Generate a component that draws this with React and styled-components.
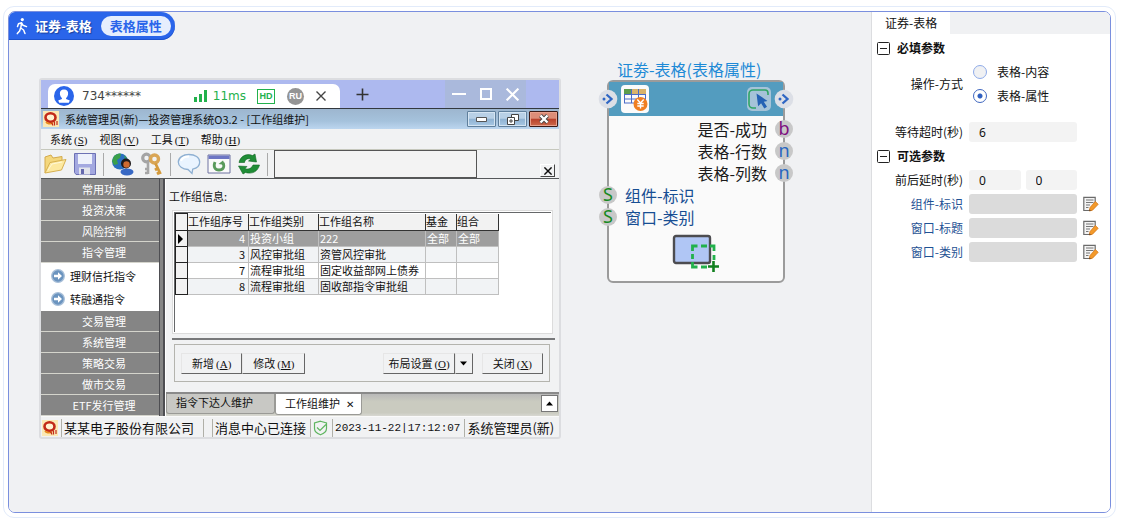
import { useState } from 'react'
import styled, { createGlobalStyle } from 'styled-components'

const GlobalStyle = createGlobalStyle`
  * {
    box-sizing: border-box;
  }
  body {
    margin: 0;
    background: #fff;
    color: #111;
    font: 12px/16px "Noto Sans CJK SC", sans-serif;
  }
  button, input {
    font: inherit;
    color: inherit;
    margin: 0;
  }
  button {
    padding: 0;
    border: 0;
    background: none;
    white-space: nowrap;
    cursor: pointer;
  }
  a {
    color: inherit;
    text-decoration: none;
  }
  svg {
    display: block;
    flex: none;
  }
`

/* ---------- page shell ---------- */

const Page = styled.div`
  display: flex;
  min-height: 100vh;
  padding: 6px 9px 2px 3px;
`
const Ring = styled.div`
  display: flex;
  flex: 1;
  padding: 4px;
  border: 1px solid #e2ebfa;
  border-radius: 11px;
`
const Shell = styled.div`
  display: flex;
  flex: 1;
  border: 1px solid #7a8fde;
  border-radius: 7px;
  overflow: hidden;
`
const Canvas = styled.main`
  flex: 1;
  min-width: 0;
  background: #f0f1f3;
`
const Crumb = styled.header`
  display: inline-flex;
  align-items: center;
  height: 28px;
  padding: 0 4px 0 4px;
  gap: 9px;
  border-radius: 0 14px 14px 0;
  background: #2a65ea;
  box-shadow: inset 0 -1px 0 #1d52cc;
  color: #fff;
  font-size: 13px;
  font-weight: 700;
`
const CrumbTitle = styled.h1`
  display: flex;
  align-items: center;
  gap: 4px;
  margin: 0;
  font-size: 13px;
  text-shadow: 1px 1px 1px #1a3f9c;
`
const CrumbBadge = styled.span`
  padding: 0 9px;
  line-height: 20px;
  border-radius: 10px;
  background: #e6eefd;
  color: #2a65ea;
`
const Stage = styled.div`
  display: flex;
  align-items: flex-start;
  gap: 46px;
  padding: 20px 20px 20px 30px;
`

/* ---------- remote desktop window ---------- */

const Remote = styled.section`
  flex: 0 1 522px;
  min-width: 0;
  margin-top: 18px;
  border: 2px solid #dcdde0;
  border-radius: 3px;
  background: #f1f2f3;
  font-size: 11px;
`
const RemoteBar = styled.div`
  display: flex;
  align-items: stretch;
  height: 28px;
  padding: 0 33px 0 7px;
  background: #adb9ef;
`
const RemoteTab = styled.div`
  display: flex;
  align-items: center;
  width: 292px;
  margin-top: 4px;
  padding: 0 14px 0 6px;
  border-radius: 7px 7px 0 0;
  background: #fff;
  font-family: "DejaVu Sans", sans-serif;
  font-size: 12px;
  color: #444;
`
const Account = styled.span`
  flex: 1;
  margin-left: 8px;
`
const Ping = styled.span`
  margin: 0 11px 0 5px;
  color: #22b14c;
`
const HdMark = styled.span`
  width: 18px;
  border: 1px solid #22b14c;
  color: #22b14c;
  font: 700 9px/13px "Liberation Sans", sans-serif;
  text-align: center;
`
const UserMark = styled.span`
  width: 17px;
  margin: 0 12px;
  border-radius: 50%;
  background: #949494;
  color: #fff;
  font: 700 9px/17px "Liberation Sans", sans-serif;
  text-align: center;
`
const AddTab = styled.button`
  margin-left: 16px;
  color: #333;
`
const RemoteControls = styled.div`
  display: flex;
  align-items: center;
  gap: 14px;
  margin-left: auto;
  padding: 0 7px;
  background: #aab9dc;
  color: #fff;
`

const TitleBar = styled.div`
  display: flex;
  align-items: center;
  gap: 6px;
  height: 21px;
  padding: 0 1px 0 2px;
  border-top: 1px solid #33383e;
  background: linear-gradient(#9db6cf, #a5c2dc 60%, #bcd6ef);
`
const TitleText = styled.span`
  flex: 1;
  white-space: nowrap;
`
const FrameButtons = styled.div`
  display: flex;
  gap: 2px;
`
const FrameButton = styled.button`
  display: grid;
  place-items: center;
  width: 29px;
  height: 16px;
  border: 1px solid ${p => (p.$danger ? '#3c1a16' : '#5f7f9c')};
  border-radius: 1px;
  box-shadow: inset 0 0 0 1px ${p => (p.$danger ? '#e8a08c' : '#d4e4f2')};
  background: ${p => p.$danger
    ? 'linear-gradient(#dd8d78 45%, #b8402a 50%, #cc6a4c)'
    : 'linear-gradient(#b8d0e6 45%, #8fb2d2 50%, #a8c8e4)'};
`

const MenuBar = styled.nav`
  display: flex;
  gap: 12px;
  height: 20px;
  padding-left: 9px;
  u {
    text-underline-offset: 1px;
  }
`
const Hot = styled.span`
  margin-left: 2px;
  font-family: "Liberation Serif", serif;
`

const ToolBar = styled.div`
  display: flex;
  align-items: center;
  height: 30px;
  padding: 0 4px 0 2px;
  border-top: 1px solid #c6c8bd;
  border-bottom: 1px solid #55585a;
`
const Tools = styled.div`
  display: flex;
  align-items: center;
  gap: 6px;
`
const ToolSep = styled.span`
  width: 1px;
  height: 23px;
  background: #aaa;
`
const SearchBox = styled.input`
  flex: 0 1 203px;
  min-width: 0;
  align-self: stretch;
  margin-left: 6px;
  border: 1px solid #555;
  background: #f3f3f3;
`
const PaneClose = styled.button`
  display: grid;
  place-items: center;
  align-self: flex-end;
  width: 15px;
  height: 13px;
  margin: 0 0 1px auto;
  border: 1px solid #444;
  border-top-color: #fff;
  border-left-color: #fff;
`

const Body = styled.div`
  display: flex;
`
const Side = styled.aside`
  width: 118px;
  flex: none;
  color: #fff;
  background: #858585;
`
const SideGroup = styled.button`
  display: block;
  width: 100%;
  height: 21px;
  padding: 0 0 0 8px;
  border-bottom: 1px solid #d4d4cc;
  text-align: center;
`
const SideLinks = styled.div`
  display: flex;
  flex-direction: column;
  justify-content: center;
  gap: 7px;
  height: 48px;
  padding-left: 10px;
  background: #fff;
  color: #111;
`
const SideLink = styled.a`
  display: flex;
  align-items: center;
  gap: 5px;
  white-space: nowrap;
`
const Splitter = styled.div`
  width: 6px;
  flex: none;
  background: #858585;
  border: solid #4e4e52;
  border-width: 0 2px 0 1px;
`
const Work = styled.div`
  flex: 1;
  min-width: 0;
  padding-top: 9px;
  border-left: 1px solid #fff;
`
const GroupTitle = styled.h2`
  margin: 0 3px 6px;
  font-size: 11px;
  font-weight: 400;
`
const GridFrame = styled.div`
  margin: 0 4px 4px 6px;
  padding-bottom: 4px;
  border-bottom: 2px solid #77787a;
`
const GridBox = styled.div`
  min-height: 124px;
  margin-right: 2px;
  padding: 1px;
  border: 1px solid #dcdcdc;
  background: #fff;
`
const GridInner = styled.div`
  min-height: 120px;
  border: solid #66686a;
  border-width: 1px 0 0 1px;
`
const Grid = styled.table`
  width: 323px;
  table-layout: fixed;
  border-collapse: collapse;
  line-height: 15px;
  white-space: nowrap;
`
const HeadCell = styled.th`
  height: 17px;
  padding: 0;
  border: 1px solid #333;
  border-top: 0;
  background: #f2f2f2;
  font-weight: 400;
  text-align: left;
`
const Mark = styled.th`
  padding: 0;
  border: 1px solid #222;
  background: #f2f2f2;
`
const Cell = styled.td`
  height: 16px;
  padding: 0 ${p => (p.$num ? 3 : 1)}px;
  border: 1px solid #bfbfbf;
  text-align: ${p => (p.$num ? 'right' : 'left')};
`
const Row = styled.tr`
  background: ${p => (p.$on ? '#9e9e9e' : p.$tint ? '#f1f3f5' : '#fff')};
  color: ${p => (p.$on ? '#fff' : '#111')};
`
const Actions = styled.div`
  display: flex;
  align-items: center;
  height: 38px;
  margin: 0 9px 10px 8px;
  padding: 0 6px;
  border: 1px solid #b4b4ae;
`
const Push = styled.button`
  height: 21px;
  padding: 0 ${p => (p.$slim ? 4 : 10)}px;
  border: 1px solid #666;
  border-top-color: #e6e6e6;
  border-left-color: #e6e6e6;
`
const PushSpacer = styled.span`
  flex: 1;
`
const CloseGap = styled.span`
  width: 9px;
`
const TabStrip = styled.div`
  display: flex;
  align-items: flex-start;
  height: 24px;
  padding-right: 1px;
  border-top: 2px solid #8a8a8a;
  background: linear-gradient(#b9b9b9, #cacbc0 35%, #cacbc0 85%, #d8d8d2);
`
const PageTab = styled.button`
  height: ${p => (p.$on ? 21 : 20)}px;
  padding: 0 ${p => (p.$on ? 7 : 21)}px 3px 9px;
  border: 1px solid #9a9a96;
  border-top: 0;
  border-radius: 0 0 3px 3px;
  background: ${p => (p.$on ? '#fff' : '#c8c8c4')};
`
const TabClose = styled.span`
  margin-left: 6px;
  font: 700 10px/12px "DejaVu Sans", sans-serif;
`
const StripUp = styled.button`
  width: 17px;
  height: 17px;
  margin: 1px 0 0 auto;
  border: 1px solid #777;
  background: #fff;
  display: grid;
  place-items: center;
`
const Status = styled.footer`
  display: flex;
  align-items: center;
  height: 21px;
  padding: 2px 1px 0;
  border-top: 1px solid #fafafa;
  font-size: 13px;
  white-space: nowrap;
`
const StatusCell = styled.span`
  display: flex;
  align-items: center;
  height: 18px;
  padding: 0 4px 0 2px;
  border-left: 1px solid #b0b0a8;
`
const CompanyCell = styled(StatusCell)`
  margin: 0 8px 0 3px;
  padding-right: 9px;
  border-right: 1px solid #b0b0a8;
`
const Stamp = styled(StatusCell)`
  font: 11px/16px "Liberation Mono", monospace;
`

/* ---------- flow node ---------- */

const NodeWrap = styled.article`
  flex: none;
  width: 178px;
  font-size: 16px;
`
const NodeTitle = styled.h2`
  margin: 0 0 2px;
  padding-left: 10px;
  font-size: 16px;
  font-weight: 400;
  line-height: 18px;
  white-space: nowrap;
  color: #1e8ad6;
`
const NodeCard = styled.div`
  border: 2px solid #9b9b9b;
  border-radius: 6px;
  background: #fafafa;
`
const NodeHead = styled.div`
  display: flex;
  align-items: center;
  height: 34px;
  margin: 0 -11px 2px;
  background: linear-gradient(#539cbf, #539cbf) center / calc(100% - 22px) 100% no-repeat;
`
const HeadIcon = styled.span`
  margin-left: ${p => (p.$end ? 'auto' : '3px')};
  margin-right: ${p => (p.$end ? '3px' : '0')};
`
const PortLine = styled.div`
  display: flex;
  align-items: center;
  justify-content: ${p => (p.$in ? 'flex-start' : 'flex-end')};
  gap: 8px;
  height: 22px;
  margin: 0 -10px;
  line-height: 22px;
  color: ${p => (p.$in ? '#174e93' : '#1a1a1a')};
`
const Port = styled.span`
  width: 18px;
  height: 18px;
  border-radius: 50%;
  background: #c8c8c8;
  color: ${p => p.$tone};
  font: 18px/16px "Noto Sans", sans-serif;
  text-align: center;
`
const NodePick = styled.div`
  display: flex;
  justify-content: center;
  padding: 6px 0 7px;
`

/* ---------- property panel ---------- */

const Panel = styled.aside`
  width: 239px;
  flex: none;
  border-left: 1px solid #dcdde0;
  background: #fff;
`
const PanelTabs = styled.div`
  display: flex;
  height: 22px;
  background: #f0f1f3;
`
const PanelTab = styled.button`
  padding: 0 13px;
  background: #fff;
`
const PanelForm = styled.form`
  padding: 2px 12px 0 0;
`
const SectionHead = styled.button`
  display: flex;
  align-items: center;
  gap: 7px;
  height: 24px;
  padding-left: 5px;
  font-weight: 700;
`
const Field = styled.div`
  display: grid;
  grid-template-columns: 91px 1fr 15px;
  column-gap: 6px;
  align-items: center;
  min-height: 24px;
  margin-bottom: ${p => (p.$last ? 12 : 0)}px;
`
const FieldLabel = styled.label`
  color: ${p => (p.$linked ? '#1f5294' : '#111')};
  text-align: right;
`
const Inputs = styled.div`
  display: flex;
  gap: 5px;
`
const TextInput = styled.input`
  flex: 1;
  width: 0;
  min-width: 0;
  height: 20px;
  padding: 0 10px;
  border: 0;
  border-radius: 3px;
  background: ${p => (p.$linked ? '#dbdbdb' : '#f3f3f3')};
  font-family: "Noto Sans", sans-serif;
`
const RadioLine = styled.label`
  display: flex;
  align-items: center;
  gap: 10px;
  height: 24px;
  padding-left: 4px;
`
const Radio = styled.input`
  appearance: none;
  width: 14px;
  height: 14px;
  border: 1px solid #8fabe9;
  border-radius: 50%;
  background: #f0f1f3;
  &:checked {
    border-color: #3f67bf;
    background: radial-gradient(#2f5fc0 0 2px, #fff 3px);
  }
`

/* ---------- drawings ---------- */

const Walker = () => (
  <svg width="18" height="20" viewBox="0 0 18 20" fill="none" stroke="#fff" strokeWidth="1.5" strokeLinecap="round" strokeLinejoin="round">
    <circle cx="9.3" cy="3.6" r="1.6" fill="#fff" stroke="none" />
    <path d="M4.500 10.500 5.500 7.800 8.600 6.800 10 9.300 13.500 10.600M8.500 7 7.800 12 10.600 14 12 17.500M7.600 12 6.600 15 4.300 17.600" />
  </svg>
)

const Avatar = () => (
  <svg width="20" height="20" viewBox="0 0 20 20">
    <circle cx="10" cy="10" r="10" fill="#2a65ea" />
    <path d="M10 3.400c-3 0-4.300 1.900-4.100 4.300.1 1.900.9 3.300 2 4.200v1L4.200 14.600 5.200 16.700H14.800L15.800 14.600 12.100 12.900v-1c1.100-.9 1.900-2.300 2-4.200C14.300 5.300 13 3.400 10 3.400z" fill="#fff" />
  </svg>
)

const Bars = () => (
  <svg width="14" height="14" viewBox="0 0 14 14" fill="#22b14c">
    <path d="M0 8h3v5H0zM5 5h3v8H5zM10 1h3v12h-3z" />
  </svg>
)

const Cross = ({ size = 10, width = 1.4 }) => (
  <svg width={size} height={size} viewBox="0 0 10 10" stroke="currentColor" strokeWidth={width}>
    <path d="M.5.5l9 9M9.500.5l-9 9" />
  </svg>
)

const Plus = () => (
  <svg width="13" height="13" viewBox="0 0 13 13" stroke="currentColor" strokeWidth="1.600">
    <path d="M6.500.5v12M.5 6.500h12" />
  </svg>
)

const Brand = () => (
  <svg width="16" height="16" viewBox="0 0 16 16">
    <path fill="#fbe9b4" d="M0 0h16v16H0z" />
    <ellipse cx="7.500" cy="6.500" rx="5" ry="4.300" fill="#fff2d0" stroke="#c22a18" strokeWidth="2.600" />
    <path d="M3 11c1 1.500 4 2.500 7 1" stroke="#e88a1e" strokeWidth="1.600" fill="none" />
    <path d="M8.500 11.500l1.500 3M11.500 10.500v4M14 10v4" stroke="#c22a18" strokeWidth="1.200" />
  </svg>
)

const Folder = () => (
  <svg width="24" height="22" viewBox="0 0 24 22" strokeLinejoin="round">
    <path d="M2 20V4l6-2 2 3 9-1.500V9" fill="#f4d77c" stroke="#d3aa4c" />
    <path d="M2 20 7 9.500 23 6.500 18.500 17z" fill="#fde9a0" stroke="#d6b050" />
    <path d="M5 17 9 11l10-2" stroke="#fff8d8" fill="none" />
  </svg>
)

const Disk = () => (
  <svg width="24" height="24" viewBox="0 0 24 24">
    <path d="M1.500 1.500h21v21H3l-1.500-2z" fill="#a3a8e0" stroke="#6d71b4" />
    <path d="M5 2h14v10H5z" fill="#eef1fb" />
    <path d="M6 15.500h11v7H6z" fill="#e2e4ec" />
    <path d="M8 17h3v5H8z" fill="#6569ae" />
  </svg>
)

const GlobeUser = () => (
  <svg width="24" height="24" viewBox="0 0 24 24">
    <circle cx="10" cy="9.500" r="8" fill="#2a6fc0" />
    <path d="M4 4c3-2 5-3 7-2l-1 4-3 2 1 4-4 1-2-4zM14 3l3 3-2 1z" fill="#3aa04a" />
    <ellipse cx="17" cy="20" rx="6.500" ry="3.400" fill="#3768c4" />
    <circle cx="16" cy="11.500" r="5" fill="#1f1a1a" />
    <circle cx="16.500" cy="12.500" r="3.200" fill="#cf6a30" />
  </svg>
)

const Keys = () => (
  <svg width="24" height="24" viewBox="0 0 24 24" fill="none">
    <circle cx="6.500" cy="6" r="3.800" stroke="#a4a4a4" strokeWidth="3.200" />
    <path d="M8 10v12M8 17H5M8 21H5" stroke="#a6a6a6" strokeWidth="2.600" />
    <circle cx="14.500" cy="7" r="4" stroke="#d9a555" strokeWidth="3.400" />
    <path d="M15.500 11.500 20.500 22M18 16l-3 2M20 20l-3 2" stroke="#d49a3c" strokeWidth="2.800" />
  </svg>
)

const Bubble = () => (
  <svg width="24" height="22" viewBox="0 0 24 22">
    <path d="M12 1.500c6 0 10.700 3 10.700 7.500 0 3.800-3 6.300-7 7.200L15 20.500 11 16.500C5.500 16.300 1.300 13.400 1.300 9S6 1.500 12 1.500z" fill="#eaf4ff" stroke="#8fb0d2" strokeWidth="1.300" />
    <path d="M4 8c1-3 4-4.500 8-4.500" stroke="#fff" strokeWidth="2" fill="none" />
  </svg>
)

const PageReload = () => (
  <svg width="24" height="20" viewBox="0 0 24 20">
    <path d="M1 1h22v18H1z" fill="#fafafa" stroke="#6e72a0" />
    <path d="M1.500 1.500h21v3.500h-21z" fill="#6d76c4" />
    <path d="M8 8C6 13 8 16 12 16s6-3 4-7" fill="none" stroke="#5a9a5c" strokeWidth="2.800" />
    <path d="M11.500 10 16 6.500 18 11z" fill="#5a9a5c" />
  </svg>
)

const Refresh = () => (
  <svg width="24" height="22" viewBox="0 0 24 22" fill="#1f8d36" stroke="#136424" strokeWidth=".6">
    <path d="M2 9.500C3.500 3 9.500 0 15.500 2.500L18 1l1.500 8-8-1 2.500-2C10.500 5 8 6.500 7.500 9.500z" />
    <path d="M22.500 12C21 18.500 15 21.500 8.500 19.500L6 21 1.500 13l8.500.5L8 15.500c3.500 1.500 7-.5 8-3.500z" />
  </svg>
)

const GoArrow = () => (
  <svg width="14" height="14" viewBox="0 0 14 14">
    <circle cx="7" cy="7" r="6.300" fill="#6b94bf" stroke="#a8bfd8" strokeWidth="1.300" />
    <path d="M3 5.800h4V3.300L11 7l-4 3.700V8.200H3z" fill="#fff" />
  </svg>
)

const Triangle = ({ up }) => (
  <svg width="8" height="5" viewBox="0 0 8 5">
    <path d={up ? 'M0 4.500h7L3.500.5z' : 'M0 .5h7L3.500 4.500z'} />
  </svg>
)

const Shield = () => (
  <svg width="15" height="16" viewBox="0 0 15 16" fill="none" stroke="#5fb560" strokeWidth="1.200">
    <path d="M7.500 1.200 13.500 3v5.500c0 3-2.500 5-6 6.300-3.500-1.300-6-3.300-6-6.300V3z" />
    <path d="M4 7.500 7 10.500l6-6" />
  </svg>
)

const FlowPort = () => (
  <svg width="20" height="20" viewBox="0 0 20 20">
    <circle cx="10" cy="10" r="9.300" fill="#dcdfe6" />
    <circle cx="6" cy="10" r="1.500" fill="#2f66c4" />
    <path d="M8.500 5.500 13.500 10l-5 4.500" fill="none" stroke="#2f66c4" strokeWidth="2.300" />
  </svg>
)

const TableCoin = () => (
  <svg width="28" height="28" viewBox="0 0 28 28">
    <rect width="28" height="28" rx="4" fill="#fbfbfb" />
    <path d="M3 4h7v5H3z" fill="#5d9c4c" />
    <path d="M10 4h15v5H10z" fill="#d9b36a" />
    <path d="M3 9.500h22M3 14h22M3 18h11M3.500 9v9M10.500 4v14M17.500 4v10M24.500 9v6" stroke="#4a6cc8" fill="none" />
    <circle cx="19.500" cy="19" r="7" fill="#f07f22" />
    <path d="M16.300 14.500 19.500 18l3.200-3.500M19.500 18v5.500M16.300 18.500h6.400M16.300 21h6.400" stroke="#fff" strokeWidth="1.400" fill="none" />
  </svg>
)

const PickCursor = () => (
  <svg width="24" height="24" viewBox="0 0 24 24">
    <rect width="24" height="24" rx="5" fill="#a5c3d8" />
    <path d="M21 8V6a3 3 0 0 0-3-3H6a4 4 0 0 0-4 4v10a4 4 0 0 0 4 4h3" fill="none" stroke="#2fa565" strokeWidth="1.600" />
    <path d="M9.500 6.500 20.500 14l-3.700.8 3.200 5-2.700 1.700-3.200-5.300-3 3z" fill="#2462b4" />
  </svg>
)

const AreaPick = () => (
  <svg width="48" height="40" viewBox="0 0 48 40" fill="none">
    <rect x="2" y="2" width="36" height="27" rx="2" fill="#b0c6f5" stroke="#4c4c50" strokeWidth="2.400" />
    <path d="M20.500 17v-5h5M29 12h6M38 12h4v5M42 21v5M20.500 20v5M20.500 28v5h5M29 33h6" stroke="#22b14c" strokeWidth="2.800" />
    <path d="M41.500 27v11M36 32.500h11" stroke="#12801f" strokeWidth="2.600" />
  </svg>
)

const Fold = () => (
  <svg width="13" height="13" viewBox="0 0 13 13" fill="none" stroke="#222">
    <rect x=".5" y=".5" width="12" height="12" rx="1" />
    <path d="M3 6.500h7" />
  </svg>
)

const EditNote = () => (
  <svg width="16" height="16" viewBox="0 0 16 16">
    <path d="M.8 1.300h11.400v8.500L8 14.500H.8z" fill="#f4f4f4" stroke="#6b6b6b" strokeWidth="1.200" />
    <path d="M3 4h7.500M3 6.500h7.500M3 9h4M3 11.500h2.500" stroke="#777" />
    <path d="M12.300 5.500 15.200 8.300 9.500 14.200 6.300 15 7 11.600z" fill="#f39a2b" stroke="#d87a1c" strokeWidth=".8" />
    <path d="M6.200 15l.4-1.600 1.200 1.200z" fill="#333" />
  </svg>
)

/* ---------- data ---------- */

const menus = [['系统', 'S'], ['视图', 'V'], ['工具', 'T'], ['帮助', 'H']]
const groupsTop = ['常用功能', '投资决策', '风险控制', '指令管理']
const groupsBottom = ['交易管理', '系统管理', '策略交易', '做市交易', 'ETF发行管理']
const columns = ['工作组序号', '工作组类别', '工作组名称', '基金', '组合']
const widths = [12, 61, 70, 107, 31, 42]
const rows = [
  ['4', '投资小组', '222', '全部', '全部'],
  ['3', '风控审批组', '资管风控审批', '', ''],
  ['7', '流程审批组', '固定收益部网上债券', '', ''],
  ['8', '流程审批组', '固收部指令审批组', '', ''],
]
const outputs = [
  ['是否-成功', 'b', '#7d1080'],
  ['表格-行数', 'n', '#2866c0'],
  ['表格-列数', 'n', '#2866c0'],
]
const inputs = ['组件-标识', '窗口-类别']
const linkedFields = ['组件-标识', '窗口-标题', '窗口-类别']

const HotKey = ({ k }) => <Hot>(<u>{k}</u>)</Hot>

const RemoteWindow = () => (
  <Remote>
    <RemoteBar>
      <RemoteTab>
        <Avatar />
        <Account>734******</Account>
        <Bars />
        <Ping>11ms</Ping>
        <HdMark>HD</HdMark>
        <UserMark>RU</UserMark>
        <button aria-label="关闭"><Cross /></button>
      </RemoteTab>
      <AddTab aria-label="新增"><Plus /></AddTab>
      <RemoteControls>
        <button aria-label="最小化">
          <svg width="14" height="14" viewBox="0 0 14 14" stroke="#fff" strokeWidth="2"><path d="M0 7h14" /></svg>
        </button>
        <button aria-label="最大化">
          <svg width="12" height="12" viewBox="0 0 12 12" fill="none" stroke="#fff" strokeWidth="2"><path d="M1 1h10v10H1z" /></svg>
        </button>
        <button aria-label="关闭窗口"><Cross size={13} width={1.6} /></button>
      </RemoteControls>
    </RemoteBar>

    <TitleBar>
      <Brand />
      <TitleText>系统管理员(新)—投资管理系统O3.2 - [工作组维护]</TitleText>
      <FrameButtons>
        <FrameButton aria-label="最小化">
          <svg width="11" height="5" viewBox="0 0 11 5"><path d="M.5.5h10v4H.5z" fill="#fff" stroke="#555" /></svg>
        </FrameButton>
        <FrameButton aria-label="还原">
          <svg width="12" height="11" viewBox="0 0 12 11" fill="#fff" stroke="#444"><path d="M4.500.5h7v6h-7z" /><path d="M.5 3.500h7v7h-7z" /><path d="M3 6h2v2H3z" /></svg>
        </FrameButton>
        <FrameButton $danger aria-label="关闭窗口">
          <svg width="12" height="10" viewBox="0 0 12 10"><path d="M2.500 1.500l7 7M9.500 1.500l-7 7" stroke="#444" strokeWidth="4" /><path d="M2.500 1.500l7 7M9.500 1.500l-7 7" stroke="#fff" strokeWidth="2.400" /></svg>
        </FrameButton>
      </FrameButtons>
    </TitleBar>

    <MenuBar>
      {menus.map(([text, k]) => (
        <button key={k}>{text}<HotKey k={k} /></button>
      ))}
    </MenuBar>

    <ToolBar>
      <Tools>
        <button aria-label="打开"><Folder /></button>
        <button aria-label="保存"><Disk /></button>
        <ToolSep />
        <button aria-label="用户"><GlobeUser /></button>
        <button aria-label="权限"><Keys /></button>
        <ToolSep />
        <button aria-label="消息"><Bubble /></button>
        <button aria-label="重载"><PageReload /></button>
        <button aria-label="刷新"><Refresh /></button>
        <ToolSep />
      </Tools>
      <SearchBox aria-label="搜索" />
      <PaneClose aria-label="关闭面板"><Cross size={8} width={1.8} /></PaneClose>
    </ToolBar>

    <Body>
      <Side>
        {groupsTop.map(name => <SideGroup key={name}>{name}</SideGroup>)}
        <SideLinks>
          <SideLink href="#trust"><GoArrow />理财信托指令</SideLink>
          <SideLink href="#margin"><GoArrow />转融通指令</SideLink>
        </SideLinks>
        {groupsBottom.map(name => <SideGroup key={name}>{name}</SideGroup>)}
      </Side>
      <Splitter />
      <Work>
        <GroupTitle>工作组信息:</GroupTitle>
        <GridFrame>
          <GridBox>
            <GridInner>
              <Grid>
                <colgroup>
                  {widths.map((w, i) => <col key={i} width={w} />)}
                </colgroup>
                <thead>
                  <tr>
                    <Mark />
                    {columns.map(name => <HeadCell key={name}>{name}</HeadCell>)}
                  </tr>
                </thead>
                <tbody>
                  {rows.map((row, i) => (
                    <Row key={row[0]} $on={i === 0} $tint={i % 2 === 1}>
                      <Mark>
                        {i === 0 && <svg width="8" height="10" viewBox="0 0 8 10"><path d="M2 0v10l5-5z" /></svg>}
                      </Mark>
                      {row.map((text, j) => <Cell key={j} $num={j === 0}>{text}</Cell>)}
                    </Row>
                  ))}
                </tbody>
              </Grid>
            </GridInner>
          </GridBox>
        </GridFrame>
        <Actions>
          <Push>新增<HotKey k="A" /></Push>
          <Push>修改<HotKey k="M" /></Push>
          <PushSpacer />
          <Push $slim>布局设置<HotKey k="O" /></Push>
          <Push $slim aria-label="更多布局"><Triangle /></Push>
          <CloseGap />
          <Push>关闭<HotKey k="X" /></Push>
        </Actions>
        <TabStrip>
          <PageTab>指令下达人维护</PageTab>
          <PageTab $on>工作组维护<TabClose>✕</TabClose></PageTab>
          <StripUp aria-label="展开"><Triangle up /></StripUp>
        </TabStrip>
      </Work>
    </Body>

    <Status>
      <Brand />
      <CompanyCell>某某电子股份有限公司</CompanyCell>
      <StatusCell>消息中心已连接</StatusCell>
      <StatusCell><Shield /></StatusCell>
      <Stamp>2023-11-22|17:12:07</Stamp>
      <StatusCell>系统管理员(新)</StatusCell>
    </Status>
  </Remote>
)

const FlowNode = () => (
  <NodeWrap>
    <NodeTitle>证劵-表格(表格属性)</NodeTitle>
    <NodeCard>
      <NodeHead>
        <FlowPort />
        <HeadIcon><TableCoin /></HeadIcon>
        <HeadIcon $end><PickCursor /></HeadIcon>
        <FlowPort />
      </NodeHead>
      {outputs.map(([text, type, tone]) => (
        <PortLine key={text}>{text}<Port $tone={tone}>{type}</Port></PortLine>
      ))}
      {inputs.map(text => (
        <PortLine key={text} $in><Port $tone="#168a22">S</Port>{text}</PortLine>
      ))}
      <NodePick><AreaPick /></NodePick>
    </NodeCard>
  </NodeWrap>
)

const PropertyPanel = () => {
  const [mode, setMode] = useState('表格-属性')

  return (
    <Panel>
      <PanelTabs><PanelTab>证券-表格</PanelTab></PanelTabs>
      <PanelForm onSubmit={e => e.preventDefault()}>
        <SectionHead type="button"><Fold />必填参数</SectionHead>
        <Field $last role="radiogroup" aria-labelledby="mode">
          <FieldLabel as="span" id="mode">操作-方式</FieldLabel>
          <div>
            {['表格-内容', '表格-属性'].map(name => (
              <RadioLine key={name}>
                <Radio type="radio" name="mode" checked={mode === name} onChange={() => setMode(name)} />
                {name}
              </RadioLine>
            ))}
          </div>
        </Field>
        <Field>
          <FieldLabel htmlFor="timeout">等待超时(秒)</FieldLabel>
          <Inputs><TextInput id="timeout" defaultValue="6" /></Inputs>
        </Field>
        <SectionHead type="button"><Fold />可选参数</SectionHead>
        <Field>
          <FieldLabel htmlFor="before">前后延时(秒)</FieldLabel>
          <Inputs>
            <TextInput id="before" defaultValue="0" />
            <TextInput aria-label="后延时" defaultValue="0" />
          </Inputs>
        </Field>
        {linkedFields.map((name, i) => (
          <Field key={name}>
            <FieldLabel $linked htmlFor={`linked-${i}`}>{name}</FieldLabel>
            <Inputs><TextInput $linked id={`linked-${i}`} /></Inputs>
            <button type="button" aria-label="编辑"><EditNote /></button>
          </Field>
        ))}
      </PanelForm>
    </Panel>
  )
}

const App = () => (
  <Page>
    <GlobalStyle />
    <Ring>
      <Shell>
        <Canvas>
          <Crumb>
            <CrumbTitle><Walker />证券-表格</CrumbTitle>
            <CrumbBadge>表格属性</CrumbBadge>
          </Crumb>
          <Stage>
            <RemoteWindow />
            <FlowNode />
          </Stage>
        </Canvas>
        <PropertyPanel />
      </Shell>
    </Ring>
  </Page>
)

export default App
